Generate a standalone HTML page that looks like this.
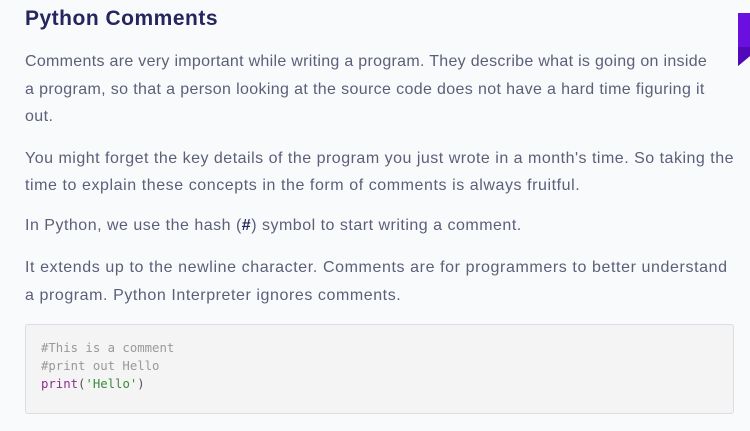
<!DOCTYPE html>
<html><head><meta charset="utf-8"><style>
html,body{margin:0;padding:0;}
body{width:750px;height:431px;background:#f9fafc;overflow:hidden;position:relative;font-family:"Liberation Sans",sans-serif;}
h1{position:absolute;left:25px;top:7px;margin:0;font-size:21px;font-weight:bold;color:#25265e;letter-spacing:0.5px;}
.l{position:absolute;left:25px;font-size:16px;color:#5b5f78;white-space:nowrap;line-height:20px;}
.code{position:absolute;left:25px;top:324px;width:707px;height:88px;background:#f4f4f4;border:1px solid #dcdde3;border-radius:3px;}
.c{position:absolute;left:15px;font-family:"DejaVu Sans Mono","Liberation Mono",monospace;font-size:12.3px;color:#999;white-space:pre;line-height:18px;}
.bar{position:absolute;left:738px;top:13px;width:12px;height:53px;}
</style></head><body>
<h1>Python Comments</h1>
<div class="l" style="top:52px;letter-spacing:0.3px">Comments are very important while writing a program. They describe what is going on inside</div>
<div class="l" style="top:80px;letter-spacing:0.36px">a program, so that a person looking at the source code does not have a hard time figuring it</div>
<div class="l" style="top:107px;letter-spacing:0.4px">out.</div>
<div class="l" style="top:149px;letter-spacing:0.5px">You might forget the key details of the program you just wrote in a month's time. So taking the</div>
<div class="l" style="top:176px;letter-spacing:0.57px">time to explain these concepts in the form of comments is always fruitful.</div>
<div class="l" style="top:216px;letter-spacing:0.5px">In Python, we use the hash (<b style="color:#25265e">#</b>) symbol to start writing a comment.</div>
<div class="l" style="top:258px;letter-spacing:0.6px">It extends up to the newline character. Comments are for programmers to better understand</div>
<div class="l" style="top:286px;letter-spacing:0.57px">a program. Python Interpreter ignores comments.</div>
<div class="code">
<div class="c" style="top:14px">#This is a comment</div>
<div class="c" style="top:32px">#print out Hello</div>
<div class="c" style="top:50px"><span style="color:#8b2f8f">print</span><span style="color:#555">(</span><span style="color:#3a8a3a">'Hello'</span><span style="color:#555">)</span></div>
</div>
<svg class="bar" viewBox="0 0 12 53"><polygon points="0,0 12,0 12,43 0,53" fill="#6a0fe0"/><polygon points="0,34 12,34 12,43 0,53" fill="#5208b8"/></svg>
</body></html>
